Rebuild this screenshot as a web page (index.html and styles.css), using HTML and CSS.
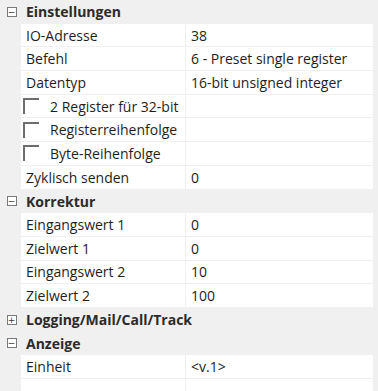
FILE: index.html
```html
<!DOCTYPE html>
<html lang="de">
<head>
  <meta charset="UTF-8">
  <title>Eigenschaften</title>
  <link rel="stylesheet" href="styles.css">
</head>
<body>
  <div class="grid">
    <div class="row cat">
      <span class="gutter"><span class="toggle">&minus;</span></span>
      <span class="cat-name">Einstellungen</span>
    </div>
    <div class="row"><span class="gutter"></span><span class="name">IO-Adresse</span><span class="value">38</span></div>
    <div class="row"><span class="gutter"></span><span class="name">Befehl</span><span class="value">6 - Preset single register</span></div>
    <div class="row"><span class="gutter"></span><span class="name">Datentyp</span><span class="value">16-bit unsigned integer</span></div>
    <div class="row"><span class="gutter"></span><span class="name check"><span class="box"></span>2 Register für 32-bit</span><span class="value"></span></div>
    <div class="row"><span class="gutter"></span><span class="name check"><span class="box"></span>Registerreihenfolge</span><span class="value"></span></div>
    <div class="row"><span class="gutter"></span><span class="name check"><span class="box"></span>Byte-Reihenfolge</span><span class="value"></span></div>
    <div class="row"><span class="gutter"></span><span class="name">Zyklisch senden</span><span class="value">0</span></div>

    <div class="row cat">
      <span class="gutter"><span class="toggle">&minus;</span></span>
      <span class="cat-name">Korrektur</span>
    </div>
    <div class="row"><span class="gutter"></span><span class="name">Eingangswert 1</span><span class="value">0</span></div>
    <div class="row"><span class="gutter"></span><span class="name">Zielwert 1</span><span class="value">0</span></div>
    <div class="row"><span class="gutter"></span><span class="name">Eingangswert 2</span><span class="value">10</span></div>
    <div class="row"><span class="gutter"></span><span class="name">Zielwert 2</span><span class="value">100</span></div>

    <div class="row cat">
      <span class="gutter"><span class="toggle">+</span></span>
      <span class="cat-name">Logging/Mail/Call/Track</span>
    </div>

    <div class="row cat">
      <span class="gutter"><span class="toggle">&minus;</span></span>
      <span class="cat-name">Anzeige</span>
    </div>
    <div class="row"><span class="gutter"></span><span class="name">Einheit</span><span class="value">&lt;v.1&gt;</span></div>
    <div class="row empty"><span class="gutter"></span><span class="name"></span><span class="value"></span></div>
  </div>
</body>
</html>
```

FILE: styles.css
```css
* {
  margin: 0;
  padding: 0;
  box-sizing: border-box;
}

body {
  background: #f0f0f0;
  font-family: 'Open Sans', 'Noto Sans', sans-serif;
  font-size: 14px;
  color: #1e1e1e;
  width: 378px;
  height: 391px;
  overflow: hidden;
}

.grid {
  width: 375px;
  display: flex;
  flex-direction: column;
}

.row {
  display: grid;
  grid-template-columns: 21px 165px 1fr;
  height: 23.7px;
  align-items: stretch;
}

.gutter {
  background: #f0f0f0;
  display: flex;
  align-items: center;
  justify-content: center;
}

.name,
.value {
  background: #fff;
  border-bottom: 1px solid #f0f0f0;
  display: flex;
  align-items: center;
  white-space: nowrap;
}

.name {
  padding-left: 5px;
  border-right: 1px solid #f0f0f0;
}

.value {
  padding-left: 5px;
  border-right: 2px solid #f0f0f0;
}

.row.cat {
  grid-template-columns: 21px 1fr;
  background: #f0f0f0;
}

.cat-name {
  display: flex;
  align-items: center;
  padding-left: 5px;
  font-weight: 700;
  color: #2b2b2b;
}

.toggle {
  width: 10px;
  height: 10px;
  border: 1px solid #7a7a7a;
  color: #3a3a3a;
  font-family: 'DejaVu Sans', sans-serif;
  font-size: 9px;
  line-height: 8px;
  display: flex;
  align-items: center;
  justify-content: center;
  margin-left: 2px;
  background: #fff;
}

.name.check {
  padding-left: 2px;
}

.box {
  width: 16px;
  height: 16px;
  border-top: 2px solid #6d6d6d;
  border-left: 2px solid #6d6d6d;
  margin-right: 11px;
  flex: none;
}

.row.empty {
  height: 12px;
}

.row.empty .name,
.row.empty .value {
  border-bottom: none;
}
```
